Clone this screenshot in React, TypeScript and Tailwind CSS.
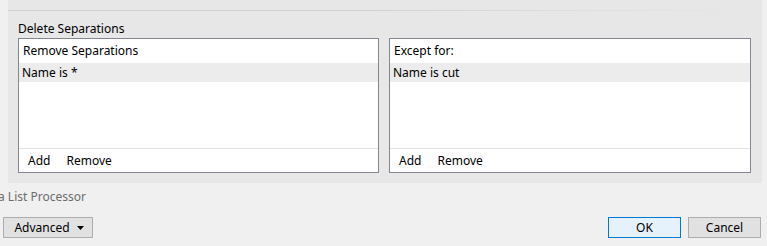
import React from "react";

const font = { fontFamily: '"Noto Sans", "Segoe UI", Arial, sans-serif' };

function ListBox({ header, item, w }: { header: string; item: string; w: string }) {
  return (
    <div className={`flex h-[135px] flex-col border border-[#828790] bg-white ${w}`}>
      <div className="mr-[2px] flex h-[24px] items-center pl-[4px] text-[12px] text-black">{header}</div>
      <div className="flex h-[19px] items-center bg-[#ececec] pl-[3px] text-[12px] text-black">{item}</div>
      <div className="flex-1 border-b border-[#e3e3e3]" />
      <div className="flex h-[23px] items-center gap-[16px] pl-[9px] text-[12px] text-black">
        <span>Add</span>
        <span>Remove</span>
      </div>
    </div>
  );
}

export default function App() {
  return (
    <div className="h-[246px] w-[767px] overflow-hidden bg-[#f0f0f0] leading-none" style={font}>
      <div className="ml-[8px] h-[183px] w-[754px] bg-[#e7e7e7] pt-[10px]">
        <div className="mr-[20px] h-[1px] bg-gradient-to-r from-[#d3d3d3] via-[#d3d3d3] to-[#e7e7e7]" />
        <div className="pl-[10px]">
          <div className="flex h-[27px] items-center pt-[8px] text-[12px] text-black">Delete Separations</div>
          <div className="flex gap-[10px]">
            <ListBox header="Remove Separations" item="Name is *" w="w-[361px]" />
            <ListBox header="Except for:" item="Name is cut" w="w-[362px]" />
          </div>
        </div>
      </div>
      <div className="ml-[-2px] mt-[8px] h-[14px] text-[12px] text-[#6d6d6d]">a List Processor</div>
      <div className="mt-[12px] flex items-center pl-[3px] pr-[6px]">
        <div className="flex h-[21px] w-[90px] items-center justify-center gap-[7px] border border-[#adadad] bg-[#e1e1e1] pl-[2px] text-[12px] text-black">
          <span>Advanced</span>
          <svg width="7" height="4" viewBox="0 0 7 4">
            <path d="M0 0 H7 L3.5 4 Z" fill="#000" />
          </svg>
        </div>
        <div className="flex-1" />
        <div className="flex h-[21px] w-[73px] items-center justify-center border border-[#0078d7] bg-[#e5f1fb] text-[12px] text-black">
          OK
        </div>
        <div className="ml-[7px] flex h-[21px] w-[73px] items-center justify-center border border-[#adadad] bg-[#e1e1e1] text-[12px] text-black">
          Cancel
        </div>
      </div>
    </div>
  );
}
